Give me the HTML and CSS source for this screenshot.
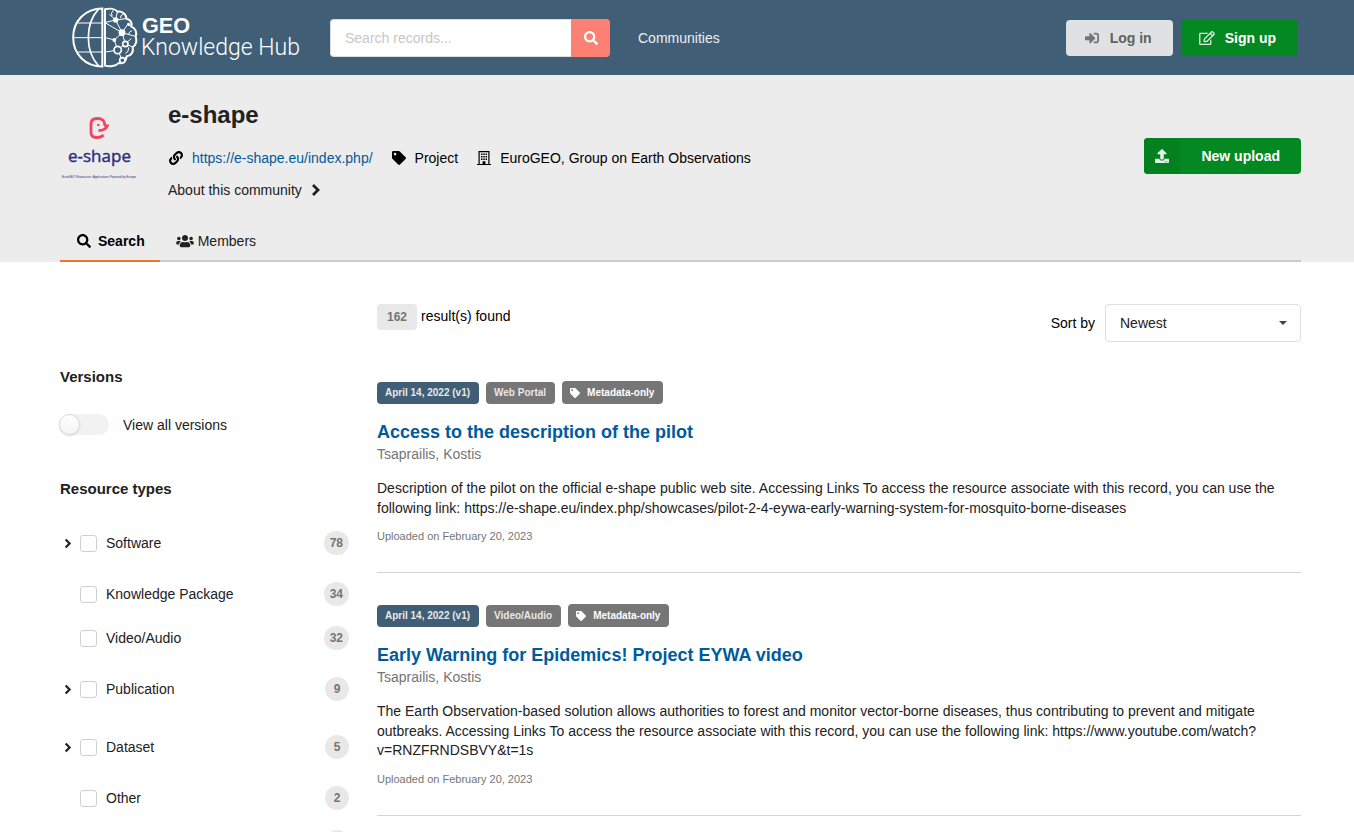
FILE: index.html
```html
<!DOCTYPE html>
<html lang="en">
<head>
<meta charset="utf-8">
<title>e-shape</title>
<link rel="stylesheet" href="styles.css">
</head>
<body>
<svg class="sprite" aria-hidden="true">
  <symbol id="i-search" viewBox="0 0 512 512"><path d="M505 442.7L405.3 343c-4.5-4.5-10.6-7-17-7H372c27.6-35.3 44-79.7 44-128C416 93.1 322.9 0 208 0S0 93.1 0 208s93.1 208 208 208c48.3 0 92.7-16.4 128-44v16.3c0 6.4 2.5 12.5 7 17l99.7 99.7c9.4 9.4 24.6 9.4 33.9 0l28.3-28.3c9.4-9.4 9.4-24.6.1-34zM208 336c-70.7 0-128-57.2-128-128 0-70.7 57.2-128 128-128 70.7 0 128 57.2 128 128 0 70.7-57.2 128-128 128z"/></symbol>
  <symbol id="i-tag" viewBox="0 0 512 512"><path d="M0 252.118V48C0 21.49 21.49 0 48 0h204.118a48 48 0 0 1 33.941 14.059l211.882 211.882c18.745 18.745 18.745 49.137 0 67.882L293.823 497.941c-18.745 18.745-49.137 18.745-67.882 0L14.059 286.059A48 48 0 0 1 0 252.118zM112 64c-26.51 0-48 21.49-48 48s21.49 48 48 48 48-21.49 48-48-21.49-48-48-48z"/></symbol>
  <symbol id="i-link" viewBox="0 0 512 512"><path d="M326.612 185.391c59.747 59.809 58.927 155.698.36 214.59-.11.12-.24.25-.36.37l-67.2 67.2c-59.27 59.27-155.699 59.262-214.96 0-59.27-59.26-59.27-155.7 0-214.96l37.106-37.106c9.84-9.84 26.786-3.3 27.294 10.606.648 17.722 3.826 35.527 9.69 52.721 1.986 5.822.567 12.262-3.783 16.612l-13.087 13.087c-28.026 28.026-28.905 73.66-1.155 101.96 28.024 28.579 74.086 28.749 102.325.51l67.2-67.19c28.191-28.191 28.073-73.757 0-101.83-3.701-3.694-7.429-6.564-10.341-8.569a16.037 16.037 0 0 1-6.947-12.606c-.396-10.567 3.348-21.456 11.698-29.806l21.054-21.055c5.521-5.521 14.182-6.199 20.584-1.731a152.482 152.482 0 0 1 20.522 17.197zM467.547 44.449c-59.261-59.262-155.69-59.27-214.96 0l-67.2 67.2c-.12.12-.25.25-.36.37-58.566 58.892-59.387 154.781.36 214.59a152.454 152.454 0 0 0 20.521 17.196c6.402 4.468 15.064 3.789 20.584-1.731l21.054-21.055c8.35-8.35 12.094-19.239 11.698-29.806a16.037 16.037 0 0 0-6.947-12.606c-2.912-2.005-6.64-4.875-10.341-8.569-28.073-28.073-28.191-73.639 0-101.83l67.2-67.19c28.239-28.239 74.3-28.069 102.325.51 27.75 28.3 26.872 73.934-1.155 101.96l-13.087 13.087c-4.35 4.35-5.769 10.79-3.783 16.612 5.864 17.194 9.042 34.999 9.69 52.721.509 13.906 17.454 20.446 27.294 10.606l37.106-37.106c59.271-59.259 59.271-155.699.001-214.959z"/></symbol>
  <symbol id="i-signin" viewBox="0 0 512 512"><path d="M416 448h-84c-6.600 0-12-5.400-12-12v-40c0-6.600 5.400-12 12-12h84c17.700 0 32-14.300 32-32V160c0-17.700-14.300-32-32-32h-84c-6.600 0-12-5.400-12-12V76c0-6.600 5.400-12 12-12h84c53 0 96 43 96 96v192c0 53-43 96-96 96zm-47-201L201 79c-15-15-41-4.500-41 17v96H24c-13.300 0-24 10.700-24 24v96c0 13.300 10.700 24 24 24h136v96c0 21.500 26 32 41 17l168-168c9.300-9.400 9.300-24.600 0-34z"/></symbol>
  <symbol id="i-edit" viewBox="0 0 576 512"><path d="M402.300 344.900l32-32c5-5 13.700-1.500 13.700 5.700V464c0 26.500-21.500 48-48 48H48c-26.500 0-48-21.500-48-48V112c0-26.500 21.500-48 48-48h273.500c7.100 0 10.700 8.600 5.700 13.700l-32 32c-1.500 1.500-3.500 2.300-5.700 2.300H48v352h352V350.500c0-2.100.8-4.100 2.300-5.600zm156.600-201.800L296.300 405.700l-90.400 10c-26.200 2.900-48.500-19.200-45.600-45.600l10-90.400L432.900 17.100c22.900-22.900 59.900-22.900 82.700 0l43.200 43.200c22.900 22.900 22.900 60 .1 82.800zM460.100 174L402 115.900 216.200 301.800l-7.300 65.300 65.300-7.300L460.100 174zm64.800-79.700l-43.200-43.200c-4.100-4.100-10.800-4.100-14.800 0L436 82l58.100 58.100 30.900-30.900c4-4.200 4-10.800-.1-14.900z"/></symbol>
  <symbol id="i-upload" viewBox="0 0 512 512"><path d="M296 384h-80c-13.300 0-24-10.700-24-24V192h-87.700c-17.800 0-26.700-21.500-14.100-34.100L242.300 5.700c7.500-7.500 19.800-7.500 27.300 0l152.200 152.200c12.600 12.600 3.700 34.100-14.100 34.100H320v168c0 13.300-10.700 24-24 24zm216-8v112c0 13.300-10.700 24-24 24H24c-13.300 0-24-10.700-24-24V376c0-13.300 10.700-24 24-24h136v8c0 30.900 25.100 56 56 56h80c30.900 0 56-25.100 56-56v-8h136c13.300 0 24 10.700 24 24zm-124 88c0-11-9-20-20-20s-20 9-20 20 9 20 20 20 20-9 20-20zm64 0c0-11-9-20-20-20s-20 9-20 20 9 20 20 20 20-9 20-20z"/></symbol>
  <symbol id="i-users" viewBox="0 0 640 512"><path d="M96 224c35.300 0 64-28.700 64-64s-28.700-64-64-64-64 28.700-64 64 28.700 64 64 64zm448 0c35.300 0 64-28.700 64-64s-28.700-64-64-64-64 28.700-64 64 28.700 64 64 64zm32 32h-64c-17.600 0-33.500 7.100-45.100 18.600 40.300 22.100 68.900 62 75.100 109.400h66c17.700 0 32-14.300 32-32v-32c0-35.300-28.700-64-64-64zm-256 0c61.900 0 112-50.100 112-112S381.900 32 320 32 208 82.100 208 144s50.100 112 112 112zm76.800 32h-8.300c-20.800 10-43.900 16-68.500 16s-47.600-6-68.500-16h-8.300C179.600 288 128 339.600 128 403.200V432c0 26.500 21.500 48 48 48h288c26.500 0 48-21.500 48-48v-28.800c0-63.600-51.600-115.200-115.200-115.200zm-223.700-13.400C161.500 263.100 145.600 256 128 256H64c-35.300 0-64 28.700-64 64v32c0 17.700 14.300 32 32 32h65.900c6.300-47.400 34.900-87.300 75.200-109.400z"/></symbol>
  <symbol id="i-building" viewBox="0 0 14 14"><path fill-rule="evenodd" d="M1.500 0h11v13H14v1H0v-1h1.500zM2.700 1.200V13h2.900v-2.800h2.800V13h2.900V1.200z"/><path d="M4 2.500h1.500V4H4zm2.300 0h1.500V4H6.300zm2.300 0H10V4H8.600zM4 5h1.500v1.500H4zm2.300 0h1.500v1.500H6.300zm2.300 0H10v1.500H8.600zM4 7.500h1.500V9H4zm2.300 0h1.500V9H6.300zm2.300 0H10V9H8.600z"/></symbol>
  <symbol id="i-chevron" viewBox="0 0 10 14"><path d="M2 2l5 5-5 5" fill="none" stroke="currentColor" stroke-width="2.800"/></symbol>
</svg>

<header class="topbar">
  <a class="brand" href="#" aria-label="GEO Knowledge Hub">
    <svg class="brand-logo" viewBox="36 21 684 183">
      <g fill="none" stroke="#fff">
        <path stroke-width="6" d="M127 25.500V199.500C76 199.500 39.500 162 39.500 112.500S76 25.500 127 25.500z"/>
        <path stroke-width="5" d="M115 28C75 72 75 152 115 197"/>
        <path stroke-width="3" d="M54 69H126M40 113H126M54 156H126"/>
        <path stroke-width="6" stroke-linejoin="round" d="M135 28C150 24 166 26 172 35C186 32 200 43 199 56C211 57 218 70 214 80C226 84 232 98 227 109C231 122 228 135 218 141C222 156 213 168 200 169C199 184 187 193 176 189C168 199 148 201 135 197z"/>
        <path stroke-width="3" d="M167 60L172 36M167 60L148 43M167 60L186 98M167 60L137 67M167 60L197 56M186 98L204 72M186 98L226 109M186 98L163 120M186 98L137 69M186 98L196 131M163 120L137 113M163 120L173 150M196 131L218 141M196 131L173 150M173 150L137 156M173 150L187 181M187 181L201 170M203 72L214 80M196 131L214 116M160 31Q151 38 156 48M190 42Q180 46 182 54M216 92Q208 94 205 103M206 142Q207 157 196 160"/>
        <g fill="#405f76" stroke-width="5"><circle cx="173" cy="150" r="11"/><circle cx="196" cy="132" r="8"/><circle cx="187" cy="181" r="8"/></g>
      </g>
      <g fill="#fff"><circle cx="167" cy="60" r="8"/><circle cx="186" cy="98" r="10"/><circle cx="163" cy="120" r="6"/><circle cx="206" cy="73" r="5"/></g>
      <text class="brand-geo" x="246" y="100">GEO</text>
      <text class="brand-hub" x="243" y="164">Knowledge Hub</text>
    </svg>
  </a>
  <form class="site-search">
    <input type="text" placeholder="Search records..." aria-label="Search records">
    <button type="button" aria-label="Search"><svg class="icon"><use href="#i-search"/></svg></button>
  </form>
  <nav class="topnav"><a href="#">Communities</a></nav>
  <div class="account">
    <button type="button" class="btn btn-login"><svg class="icon"><use href="#i-signin"/></svg>Log in</button>
    <button type="button" class="btn btn-signup"><svg class="icon icon-wide"><use href="#i-edit"/></svg>Sign up</button>
  </div>
</header>

<section class="community">
  <div class="community-head">
    <svg class="community-logo" viewBox="0 0 80 80" role="img" aria-label="e-shape logo">
      <path d="M43.500 27C41 30 31 31.500 31 24.500V16C31 12 33.500 10.500 37 10.500H38C42 10.500 44.500 13 44.500 15.500C44.500 17.500 45.500 18 47.300 18C46 21 43 22.500 38.500 22.500" fill="none" stroke="#f04561" stroke-width="2.800"/>
      <circle cx="38.300" cy="17" r="1.300" fill="#f04561"/>
      <text class="logo-word" x="8" y="54">e-shape</text>
      <text class="logo-tagline" x="2" y="70">EuroGEO Showcases: Applications Powered by Europe</text>
    </svg>
    <div class="community-info">
      <h1>e-shape</h1>
      <ul class="meta">
        <li><svg class="icon"><use href="#i-link"/></svg><a href="#">https://e-shape.eu/index.php/</a></li>
        <li><svg class="icon"><use href="#i-tag"/></svg>Project</li>
        <li><svg class="icon"><use href="#i-building"/></svg>EuroGEO, Group on Earth Observations</li>
      </ul>
      <a class="about" href="#">About this community<svg class="about-chevron"><use href="#i-chevron"/></svg></a>
    </div>
    <button type="button" class="btn-upload"><span class="upload-icon"><svg class="icon"><use href="#i-upload"/></svg></span><span class="upload-label">New upload</span></button>
  </div>
  <nav class="tabs">
    <a class="tab active" href="#"><svg class="icon"><use href="#i-search"/></svg>Search</a>
    <a class="tab members" href="#"><svg class="icon icon-users"><use href="#i-users"/></svg>Members</a>
  </nav>
</section>

<main class="content">
  <aside class="filters">
    <h2>Versions</h2>
    <label class="toggle"><input type="checkbox">View all versions</label>
    <h2>Resource types</h2>
    <ul class="facets">
      <li class="facet expandable"><button type="button" aria-label="Expand Software"><svg><use href="#i-chevron"/></svg></button><label><input type="checkbox">Software</label><span class="count">78</span></li>
      <li class="facet"><label><input type="checkbox">Knowledge Package</label><span class="count">34</span></li>
      <li class="facet"><label><input type="checkbox">Video/Audio</label><span class="count">32</span></li>
      <li class="facet expandable"><button type="button" aria-label="Expand Publication"><svg><use href="#i-chevron"/></svg></button><label><input type="checkbox">Publication</label><span class="count">9</span></li>
      <li class="facet expandable"><button type="button" aria-label="Expand Dataset"><svg><use href="#i-chevron"/></svg></button><label><input type="checkbox">Dataset</label><span class="count">5</span></li>
      <li class="facet"><label><input type="checkbox">Other</label><span class="count">2</span></li>
      <li class="facet"><label><input type="checkbox">Image</label><span class="count">1</span></li>
    </ul>
  </aside>

  <section class="results">
    <div class="results-bar">
      <p class="found"><span class="total">162</span>result(s) found</p>
      <div class="sort">
        <label for="sort">Sort by</label>
        <div class="select-wrap">
          <select id="sort"><option>Newest</option><option>Oldest</option></select>
        </div>
      </div>
    </div>

    <article class="record">
      <div class="labels"><span class="label version">April 14, 2022 (v1)</span><span class="label">Web Portal</span><span class="label access"><svg><use href="#i-tag"/></svg>Metadata-only</span></div>
      <h3><a href="#">Access to the description of the pilot</a></h3>
      <p class="authors">Tsaprailis, Kostis</p>
      <p class="description">Description of the pilot on the official e-shape public web site. Accessing Links To access the resource associate with this record, you can use the following link: https://e-shape.eu/index.php/showcases/pilot-2-4-eywa-early-warning-system-for-mosquito-borne-diseases</p>
      <p class="uploaded">Uploaded on February 20, 2023</p>
    </article>

    <article class="record">
      <div class="labels"><span class="label version">April 14, 2022 (v1)</span><span class="label">Video/Audio</span><span class="label access"><svg><use href="#i-tag"/></svg>Metadata-only</span></div>
      <h3><a href="#">Early Warning for Epidemics! Project EYWA video</a></h3>
      <p class="authors">Tsaprailis, Kostis</p>
      <p class="description">The Earth Observation-based solution allows authorities to forest and monitor vector-borne diseases, thus contributing to prevent and mitigate outbreaks. Accessing Links To access the resource associate with this record, you can use the following link: https://www.youtube.com/watch?v=RNZFRNDSBVY&amp;t=1s</p>
      <p class="uploaded">Uploaded on February 20, 2023</p>
    </article>
  </section>
</main>
</body>
</html>
```

FILE: styles.css
```css
* { box-sizing: border-box; }

body {
  margin: 0;
  height: 100vh;
  overflow: hidden;
  background: #fff;
  color: #212121;
  font: 14px/20px "Liberation Sans", Arial, sans-serif;
}

h1, h2, h3, p, ul { margin: 0; padding: 0; }
ul { list-style: none; }
a { color: inherit; text-decoration: none; }
button, input, select { font: inherit; color: inherit; }
button { border: 0; padding: 0; cursor: pointer; }

.sprite { display: none; }
svg { fill: currentColor; flex: none; }
.icon { width: 14px; height: 14px; }
.icon-wide { width: 16px; }

/* Top bar */
.topbar {
  display: flex;
  align-items: center;
  height: 75px;
  padding: 0 56px 0 72px;
  background: #405f76;
}
.brand { display: flex; margin-right: 30px; }
.brand-logo { width: 228px; height: 61px; }
.brand-geo { font: bold 65px "Liberation Sans", Arial, sans-serif; fill: #fff; }
.brand-hub { font: 300 69px Roboto, "Liberation Sans", sans-serif; fill: #fff; }

.site-search { display: flex; width: 280px; height: 38px; margin-top: 1px; }
.site-search input {
  flex: 1;
  min-width: 0;
  padding: 0 14px;
  border: 1px solid #dededf;
  border-right: 0;
  border-radius: 4px 0 0 4px;
  background: #fff;
  outline: 0;
}
.site-search input::placeholder { color: #c7c7c7; }
.site-search button {
  display: flex;
  align-items: center;
  justify-content: center;
  width: 39px;
  border-radius: 0 4px 4px 0;
  background: #fc8172;
  color: #fff;
}
.topnav { margin-left: 28px; color: #eceff1; }
.account { display: flex; gap: 8px; margin-left: auto; }
.btn {
  display: flex;
  align-items: center;
  gap: 11px;
  height: 36px;
  margin-top: 1px;
  border-radius: 4px;
  font-weight: bold;
}
.btn-login { padding: 0 21px 0 19px; background: #e0e1e2; color: #606162; }
.btn-login .icon { opacity: .85; }
.btn-signup { padding: 0 22px 0 18px; gap: 10px; background: #048821; color: #fff; }
.btn-signup .icon { opacity: .85; }

/* Community header */
.community { padding: 26px 53px 0 60px; background: #ececec; }
.community-head { display: flex; align-items: flex-start; }
.community-logo { width: 80px; height: 80px; margin: 7px 28px 0 0; }
.logo-word { font: 17px "Open Sans", sans-serif; fill: #2f2c80; stroke: #2f2c80; stroke-width: .4; }
.logo-tagline { font: 3px "Liberation Sans", sans-serif; fill: #2f2c80; }
.community-info { flex: 1; }
h1 { font-size: 24px; line-height: 28px; }
.meta { display: flex; gap: 18px; margin-top: 19px; color: #000; }
.meta li { display: flex; align-items: center; gap: 9px; padding-left: 1px; }
.meta a { color: #005b9c; }
.about { display: inline-flex; align-items: center; gap: 9px; margin-top: 12px; }
.about-chevron { width: 10px; height: 14px; }
.btn-upload {
  display: flex;
  height: 36px;
  margin-top: 37px;
  border-radius: 4px;
  overflow: hidden;
  background: #048821;
  color: #fff;
  font-weight: bold;
  line-height: 36px;
}
.upload-icon {
  display: flex;
  align-items: center;
  justify-content: center;
  width: 36px;
  background: #04801f;
}
.upload-icon .icon { opacity: .9; }
.upload-label { padding: 0 21px; }
.tabs { display: flex; margin-top: 20px; border-bottom: 2px solid #ccc; }
.tab {
  display: flex;
  align-items: center;
  gap: 7px;
  height: 42px;
  margin-bottom: -2px;
  padding: 2px 16px 0 17px;
  border-bottom: 2px solid transparent;
}
.tab.active { padding-right: 15px; border-color: #f27321; color: #000; font-weight: bold; }
.tab.members { gap: 4px; padding: 2px 16px 0; }
.icon-users { width: 18px; }

/* Results page */
.content {
  display: grid;
  grid-template-columns: 289px 1fr;
  gap: 28px;
  padding: 42px 53px 0 60px;
}
.filters { padding-top: 63px; }
h2 { font-size: 15px; line-height: 20px; }
.toggle { display: flex; align-items: center; gap: 14px; margin: 27px 0 44px; }
.toggle input {
  appearance: none;
  display: flex;
  width: 49px;
  height: 21px;
  margin: 0;
  border-radius: 11px;
  background: #f2f2f2;
}
.toggle input::before {
  content: "";
  box-sizing: border-box;
  width: 21px;
  height: 21px;
  margin-left: -1px;
  border: 1px solid #d8d8d8;
  border-radius: 50%;
  background: linear-gradient(#fff, #f4f4f4);
  box-shadow: 0 1px 2px #22242626;
}
.facets { margin-top: 15px; }
.facet { display: flex; align-items: center; height: 44px; padding-left: 20px; }
.facet.expandable { height: 58px; padding-left: 0; }
.facet button { display: flex; justify-content: center; width: 20px; padding-right: 4px; background: none; }
.facet button svg { width: 8px; height: 11px; }
.facet label { display: flex; align-items: center; flex: 1; gap: 9px; }
.facet input {
  appearance: none;
  width: 17px;
  height: 17px;
  margin: 0;
  border: 1px solid #d0d0d0;
  border-radius: 3px;
  background: #fff;
}
.count {
  min-width: 24px;
  padding: 0 6px;
  border-radius: 12px;
  background: #e8e8e8;
  color: #757575;
  font-size: 12px;
  font-weight: bold;
  line-height: 24px;
  text-align: center;
}

.results-bar { display: flex; justify-content: space-between; align-items: flex-start; color: #000; }
.found { display: flex; gap: 4px; line-height: 25px; }
.total {
  padding: 0 10px;
  border-radius: 4px;
  background: #e8e8e8;
  color: #757575;
  font-size: 12px;
  font-weight: bold;
  line-height: 26px;
}
.sort { display: flex; align-items: center; gap: 10px; }
.select-wrap { display: grid; align-items: center; width: 196px; }
.select-wrap::after {
  content: "";
  grid-area: 1 / 1;
  justify-self: end;
  margin-right: 14px;
  border: 4px solid transparent;
  border-top-color: #444;
  border-bottom: 0;
  pointer-events: none;
}
.sort select {
  grid-area: 1 / 1;
  appearance: none;
  height: 38px;
  padding: 0 14px;
  border: 1px solid #dededf;
  border-radius: 4px;
  background: #fff;
  color: #212121;
}

.record { padding: 31px 0 28px; border-bottom: 1px solid #d4d4d5; }
.results-bar + .record { margin-top: 8px; }
.labels { display: flex; align-items: flex-end; gap: 7px; }
.label {
  padding: 0 9px 0 8px;
  border-radius: 4px;
  background: #767676;
  color: #e8e8e8;
  font-size: 10px;
  font-weight: bold;
  line-height: 22px;
}
.label.version { background: #405f76; }
.label.access { display: flex; align-items: center; gap: 7px; line-height: 23px; color: #fff; }
.label svg { width: 10px; height: 10px; }
h3 { margin-top: 17px; color: #005b9c; font-size: 18px; line-height: 22px; }
.authors { color: #757575; line-height: 22px; }
.description { margin-top: 14px; line-height: 1.4; }
.uploaded { margin-top: 10px; color: #757575; font-size: 11px; line-height: 16px; }
```
